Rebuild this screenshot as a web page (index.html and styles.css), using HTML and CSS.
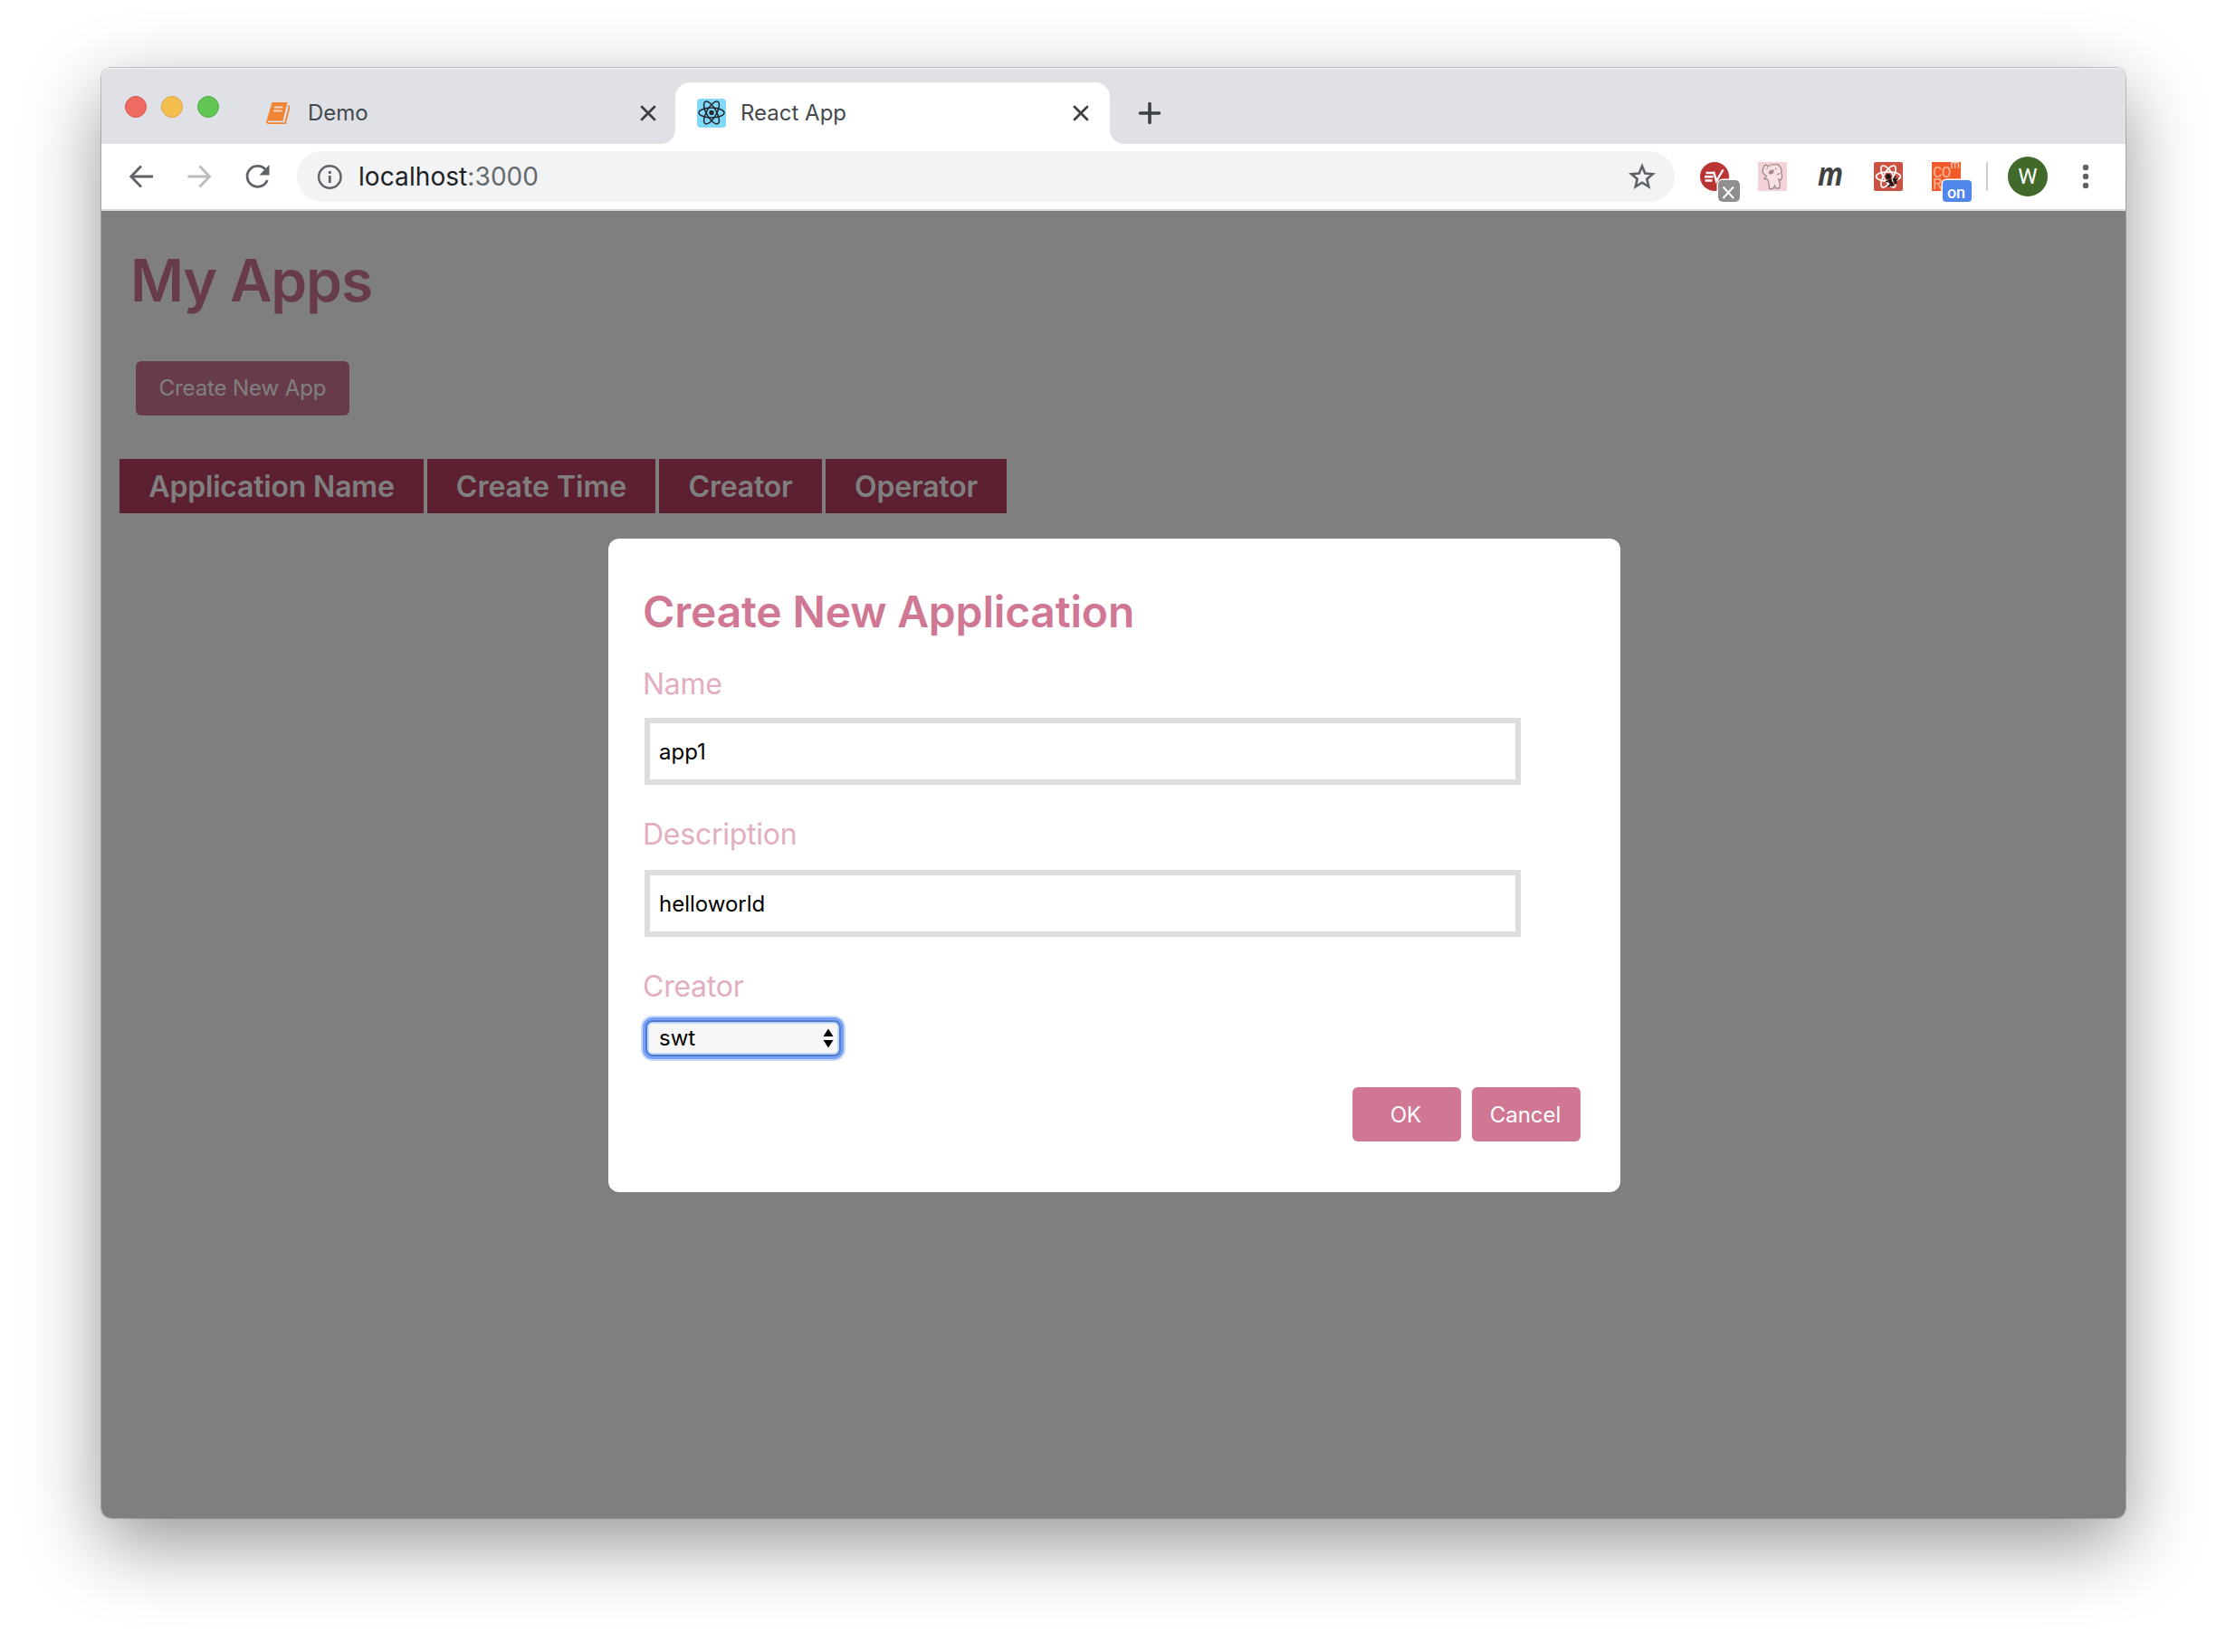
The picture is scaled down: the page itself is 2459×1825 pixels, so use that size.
FILE: index.html
```html
<!DOCTYPE html>
<html lang="en">
<head>
<meta charset="utf-8">
<title>React App</title>
<link rel="stylesheet" href="styles.css">
</head>
<body>
<div class="window">
  <div class="tabstrip">
    <div class="lights">
      <span class="light red"></span>
      <span class="light yellow"></span>
      <span class="light green"></span>
    </div>
    <div class="tab">
      <svg class="favicon" width="32" height="32" viewBox="0 0 32 32">
        <path d="M10.500 4H27.500L22.500 24.500H4.500Z" fill="#f08536"/>
        <path d="M13 9.500H22.500M12 13.500H21.500" stroke="#f6dcc8" stroke-width="1.800"/>
        <path d="M28.500 7.500L29.500 10L25 27.200H7Q4.500 27 4.800 24.500" fill="none" stroke="#f08536" stroke-width="1.800"/>
      </svg>
      <span class="tab-title demo">Demo</span>
      <svg class="close" width="24" height="24" viewBox="0 0 24 24"><path d="M5 5L19 19M19 5L5 19"/></svg>
    </div>
    <div class="tab active">
      <svg class="favicon" width="32" height="32" viewBox="0 0 32 32">
        <rect width="32" height="32" rx="4" fill="#80d8f9"/>
        <g fill="none" stroke="#20262b" stroke-width="1.500">
          <ellipse cx="16" cy="15.500" rx="14" ry="5.400"/>
          <ellipse cx="16" cy="15.500" rx="14" ry="5.400" transform="rotate(60 16 15.500)"/>
          <ellipse cx="16" cy="15.500" rx="14" ry="5.400" transform="rotate(120 16 15.500)"/>
        </g>
        <circle cx="16" cy="15.500" r="2.700" fill="#20262b"/>
      </svg>
      <span class="tab-title">React App</span>
      <svg class="close" width="24" height="24" viewBox="0 0 24 24"><path d="M5 5L19 19M19 5L5 19"/></svg>
    </div>
    <svg class="new-tab" width="28" height="28" viewBox="0 0 28 28"><path d="M14 3.500V24.500M3.500 14H24.500"/></svg>
  </div>

  <div class="toolbar">
    <div class="nav">
      <svg width="32" height="32" viewBox="0 0 32 32"><path d="M29 16H5M16 4.500L4.800 16L16 27.500" fill="none" stroke="#5f6368" stroke-width="2.800"/></svg>
      <svg width="32" height="32" viewBox="0 0 32 32"><path d="M3.500 16H27M16.500 4.500L27.500 16L16.500 27.500" fill="none" stroke="#bbbcbe" stroke-width="2.800"/></svg>
      <svg width="32" height="32" viewBox="0 0 32 32"><path d="M27.300 20A11.500 11.500 0 1 1 25 8" fill="none" stroke="#5f6368" stroke-width="2.800"/><path d="M29.500 3V14.500H18.500Z" fill="#5f6368"/></svg>
    </div>
    <div class="omnibox">
      <svg width="28" height="28" viewBox="0 0 28 28"><circle cx="14.300" cy="14.500" r="12.200" fill="none" stroke="#5f6368" stroke-width="2.500"/><path d="M14.300 13V21M14.300 8V11" stroke="#5f6368" stroke-width="2.800"/></svg>
      <span class="url">localhost<span class="port">:3000</span></span>
      <svg width="30" height="30" viewBox="0 0 30 30"><path d="M15 3.500L18.300 11.500L26.800 12.200L20.300 17.800L22.300 26.200L15 21.700L7.700 26.200L9.700 17.800L3.200 12.200L11.700 11.500Z" fill="none" stroke="#5f6368" stroke-width="2.600"/></svg>
    </div>
    <div class="extensions">
      <div class="ext">
        <svg width="32" height="32" viewBox="0 0 32 32"><circle cx="16" cy="16" r="16" fill="#b93433"/><path d="M6.500 12H15.500M5 16.300H14.500M5.500 20.500H13.500M15 10.500L18 21L25.500 8.500" fill="none" stroke="#fff" stroke-width="2.400"/></svg>
        <svg class="badge-off" width="24" height="24" viewBox="0 0 24 24"><rect width="24" height="24" rx="4" fill="#8f8f8f"/><path d="M5.500 7.500L17 20M17 7.500L5.500 20" stroke="#fff" stroke-width="2"/></svg>
      </div>
      <div class="ext">
        <svg width="32" height="32" viewBox="0 0 32 32"><rect width="32" height="32" fill="#f4d3d8"/><path d="M7 4Q9 2 11 5Q15 1.500 20 3Q23 2 24 5Q27 8 25.500 12Q28 16 25 20L23 19Q25 25 23.500 29H19.500L18.500 26L16.500 29.500H12.500Q13 24 10.500 19L7 18.500L9.500 15.500Q3.500 12 5.500 8Z" fill="#f7e1e3" stroke="#a08a8c" stroke-width="1.300"/><path d="M11.500 11.500Q12 8.500 17.500 8.500Q18 13 14.500 13.500Q11.500 13.500 11.500 11.500Z" fill="#a8878b"/><path d="M9.500 7.500L11 7M19 7L20.500 8M21 14L24 12.500" stroke="#a08a8c" stroke-width="1.200"/></svg>
      </div>
      <div class="ext letter">m</div>
      <div class="ext">
        <svg width="32" height="32" viewBox="0 0 32 32"><rect width="32" height="32" rx="2" fill="#cb5243"/>
          <g fill="none" stroke="#fff" stroke-width="1.700">
            <ellipse cx="16" cy="16" rx="13.500" ry="5.200"/>
            <ellipse cx="16" cy="16" rx="13.500" ry="5.200" transform="rotate(60 16 16)"/>
            <ellipse cx="16" cy="16" rx="13.500" ry="5.200" transform="rotate(120 16 16)"/>
          </g>
          <circle cx="16" cy="16" r="3" fill="#221a18"/>
          <path d="M15.500 20.500L19 18L22 25.500L19 27.500ZM20.500 18.500L23 17L26 23L23.500 25Z" fill="#221a18"/>
          <path d="M13 22L18 20M15.500 27L20 24.500M22.500 19L23.500 15.500M23 20.500L26.500 18.500" stroke="#221a18" stroke-width="1.600"/>
        </svg>
      </div>
      <div class="ext core">
        <span class="core-m">m</span>
        <span class="core-co">CO<br>R</span>
        <span class="badge-on">on</span>
      </div>
    </div>
    <div class="divider"></div>
    <div class="avatar">W</div>
    <svg class="menu" width="8" height="28" viewBox="0 0 8 28"><circle cx="4" cy="4" r="3.200"/><circle cx="4" cy="14" r="3.200"/><circle cx="4" cy="24" r="3.200"/></svg>
  </div>

  <div class="page">
    <h1>My Apps</h1>
    <button class="btn create">Create New App</button>
    <div class="apps">
      <div class="th name">Application Name</div>
      <div class="th time">Create Time</div>
      <div class="th creator">Creator</div>
      <div class="th operator">Operator</div>
    </div>
    <div class="overlay">
      <form class="modal">
        <h2>Create New Application</h2>
        <label for="name">Name</label>
        <input id="name" type="text" value="app1">
        <label for="desc">Description</label>
        <input id="desc" class="desc" type="text" value="helloworld">
        <label for="creator">Creator</label>
        <div class="select">
          <span>swt</span>
          <svg width="12" height="22" viewBox="0 0 12 22"><path d="M0.500 9L6 0.500L11.500 9ZM0.500 13L6 21.500L11.500 13Z"/></svg>
        </div>
        <div class="actions">
          <button type="button" class="btn">OK</button>
          <button type="button" class="btn">Cancel</button>
        </div>
      </form>
    </div>
  </div>
</div>
</body>
</html>
```
FILE: styles.css
```css
* {
  box-sizing: border-box;
}

body {
  margin: 0;
  height: 1825px;
  overflow: hidden;
  padding: 75px 111px 0 112px;
  background: #fff;
  font-family: Inter, "Liberation Sans", sans-serif;
}

svg {
  display: block;
  flex: none;
}

.window {
  width: 2236px;
  height: 1602px;
  display: flex;
  flex-direction: column;
  border-radius: 11px;
  box-shadow: 0 0 0 1px rgba(0, 0, 0, 0.2), 0 28px 84px rgba(0, 0, 0, 0.42);
}

/* tabs */
.tabstrip {
  flex: none;
  height: 84px;
  display: flex;
  align-items: flex-end;
  background: #dfe1e6;
  border-radius: 11px 11px 0 0;
  box-shadow: inset 0 2px 0 -1px #f4f5f7;
}

.lights {
  display: flex;
  gap: 16px;
  width: 154px;
  padding: 0 0 29px 26px;
}

.light {
  width: 24px;
  height: 24px;
  border-radius: 50%;
  border: 1px solid;
}

.red { background: #ed6b60; border-color: #d9564c; }
.yellow { background: #f5bf4f; border-color: #d9a33c; }
.green { background: #62c655; border-color: #50ab42; }

.tab {
  position: relative;
  width: 480px;
  height: 68px;
  display: flex;
  align-items: center;
  padding: 0 18px 0 24px;
  font-size: 24px;
  color: #45494d;
}

.tab.active {
  padding-right: 20px;
  background: #fff;
  border-radius: 16px 16px 0 0;
}

.tab.active::before,
.tab.active::after {
  content: "";
  position: absolute;
  bottom: 0;
  width: 16px;
  height: 16px;
}

.tab.active::before {
  left: -16px;
  background: radial-gradient(circle at 0 0, transparent 15.500px, #fff 16.500px);
}

.tab.active::after {
  right: -16px;
  background: radial-gradient(circle at 100% 0, transparent 15.500px, #fff 16.500px);
}

.tab-title {
  flex: 1;
  margin-left: 16px;
  line-height: 28px;
}

.demo {
  margin-left: 18px;
}

.close {
  stroke: #3c4043;
  stroke-width: 2.800;
  stroke-linecap: round;
}

.new-tab {
  margin: 0 0 20px 30px;
  stroke: #3c4043;
  stroke-width: 3.600;
  stroke-linecap: round;
}

/* toolbar */
.toolbar {
  flex: none;
  height: 74px;
  display: flex;
  align-items: center;
  padding-left: 28px;
  background: #fff;
  border-bottom: 2px solid #d9dade;
}

.nav {
  display: flex;
  gap: 32px;
}

.omnibox {
  width: 1522px;
  height: 56px;
  margin-left: 28px;
  display: flex;
  align-items: center;
  padding: 0 21px 0 22px;
  border-radius: 28px;
  background: #f1f3f4;
}

.url {
  flex: 1;
  margin-left: 18px;
  font-size: 28px;
  letter-spacing: 0.080px;
  color: #202124;
}

.port {
  color: #66696d;
}

.extensions {
  display: flex;
  gap: 32px;
  margin-left: 28px;
}

.ext {
  position: relative;
  width: 32px;
  height: 32px;
}

.badge-off {
  position: absolute;
  left: 20px;
  top: 20px;
  border-radius: 5px;
  box-shadow: 0 0 0 1.500px #fff;
}

.letter {
  font: italic bold 36px/25px "Open Sans", sans-serif;
  color: #3f4341;
  text-align: center;
  letter-spacing: -2px;
  text-indent: -2px;
  transform: scaleX(0.860);
}

.core {
  background: #f15a2b;
  color: #f9b48f;
  line-height: 1;
}

.core span {
  position: absolute;
}

.core-m {
  right: 1px;
  top: -3px;
  font-size: 12px;
  color: #fbd9c6;
}

.core-co {
  left: 1px;
  top: 6px;
  font: 18px/13px "Liberation Mono", monospace;
  letter-spacing: -1px;
}

.core .badge-on {
  left: 12px;
  top: 20px;
  width: 32px;
  height: 24px;
  padding-right: 2px;
  border-radius: 4px;
  background: #5186ec;
  box-shadow: 0 0 0 1.500px #fff;
  color: #fff;
  font: 500 18px/27px Roboto, sans-serif;
  text-align: center;
}

.divider {
  width: 2px;
  height: 32px;
  margin-left: 28px;
  background: #cfd0d2;
}

.avatar {
  width: 44px;
  height: 44px;
  margin-left: 22px;
  border-radius: 50%;
  background: #41692a;
  color: #fff;
  font: 400 24px/45px Roboto, sans-serif;
  text-align: center;
}

.menu {
  margin-left: 38px;
  fill: #5f6368;
}

/* page */
.page {
  position: relative;
  flex: 1;
  padding: 39px 20px 0;
  background: #fff;
  border-radius: 0 0 11px 11px;
}

h1 {
  margin: 0 0 51px 12px;
  font-size: 64px;
  line-height: 76px;
  font-weight: 600;
  letter-spacing: -1.150px;
  color: #cf7793;
}

.btn {
  width: 120px;
  height: 60px;
  padding: 2px 2px 0 0;
  border: 0;
  border-radius: 6px;
  background: #cf7793;
  color: #fff;
  font: 400 24px/58px Inter, sans-serif;
}

.create {
  display: block;
  width: 236px;
  margin-left: 18px;
  padding: 0;
  letter-spacing: -0.100px;
}

.apps {
  display: flex;
  gap: 4px;
  margin-top: 48px;
}

.th {
  height: 60px;
  background: #b94063;
  color: #fff;
  font-size: 32px;
  line-height: 62px;
  font-weight: 600;
  letter-spacing: -0.200px;
  text-align: center;
}

.name { width: 336px; }
.time { width: 252px; letter-spacing: 0; }
.creator { width: 180px; }
.operator { width: 200px; }

/* dialog */
.overlay {
  position: absolute;
  inset: 0;
  display: flex;
  align-items: center;
  justify-content: center;
  padding: 2px 0 0 2px;
  background: rgba(0, 0, 0, 0.500);
  border-radius: 0 0 11px 11px;
}

.modal {
  width: 1118px;
  height: 722px;
  display: flex;
  flex-direction: column;
  align-items: flex-start;
  padding: 52px 44px 0 40px;
  border-radius: 12px;
  background: #fff;
}

h2 {
  margin: 0 0 32px -2px;
  font-size: 48px;
  line-height: 58px;
  font-weight: 600;
  letter-spacing: -0.190px;
  color: #cf7793;
}

label {
  margin-left: -2px;
  font-size: 32px;
  line-height: 38px;
  letter-spacing: -0.250px;
  color: #e2aec0;
}

input {
  width: 968px;
  height: 74px;
  margin: 18px 0 36px;
  padding: 0 10px;
  border: 6px solid #ddd;
  border-radius: 0;
  background: #fff;
  color: #000;
  font: 400 24px Inter, sans-serif;
}

.desc {
  margin-top: 20px;
}

.select {
  width: 216px;
  height: 40px;
  margin-top: 18px;
  margin-left: 1px;
  display: flex;
  align-items: center;
  justify-content: space-between;
  padding: 0 6px 0 13px;
  border: 2px solid #4f7bd0;
  border-radius: 8px;
  background: #f7f7f7;
  box-shadow: inset 0 0 0 2px #c3d7f8, 0 0 0 3px #77a1f4, 0 0 0 5px #c5d8fa;
  color: #000;
  font-size: 24px;
  line-height: 36px;
}

.actions {
  align-self: flex-end;
  display: flex;
  gap: 12px;
  margin-top: 34px;
}
```
